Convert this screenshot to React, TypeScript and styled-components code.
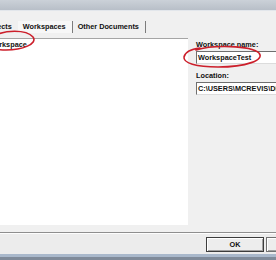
import React from 'react';
import styled, {createGlobalStyle} from 'styled-components';

const GlobalStyle = createGlobalStyle`
    html, body {
        margin: 0;
        padding: 0;
        width: 276px;
        height: 260px;
        overflow: hidden;
        background: #f0f0f0;
        font-family: "Liberation Sans", Arial, sans-serif;
    }
`;

// the screenshot is a crop of a wider dialog, so the window starts left of the viewport
const Window = styled.div`
    position: relative;
    width: 354px;
    height: 260px;
    margin-left: -24px;
    display: flex;
    flex-direction: column;
    background: #f0f0f0;
`;

const TitleBand = styled.div`
    height: 10px;
    background: linear-gradient(#cbd1d8, #b8bfc8);
    border-bottom: 1px solid #e2e6eb;
`;

const TabStrip = styled.div`
    height: 27px;
    box-sizing: border-box;
    display: flex;
    align-items: flex-end;
    padding: 0 0 5px 2px;
    background: #f0f0f0;
`;

const Tab = styled.div<{ $active?: boolean; $sep?: boolean }>`
    height: 12px;
    line-height: 12px;
    padding: 0 6px 0 5px;
    font-size: 7.3px;
    font-weight: bold;
    color: #111;
    white-space: nowrap;
    background: ${p => p.$active ? '#f7f7f7' : 'transparent'};
    border-right: ${p => p.$sep ? '1px solid #7c7c7c' : 'none'};
`;

const Main = styled.div`
    height: 187px;
    display: flex;
`;

const ListPanel = styled.div`
    flex: none;
    width: 212px;
    background: #fff;
    border-top: 1px solid #a5a5a5;
    padding: 1px 0 0 12px;
    box-sizing: border-box;
`;

const ListItem = styled.div`
    font-size: 7.3px;
    font-weight: bold;
    line-height: 9px;
    color: #111;
`;

const DetailPanel = styled.div`
    flex: 1;
    min-width: 0;
    padding: 2px 0 0 8px;
    display: flex;
    flex-direction: column;
`;

const FieldLabel = styled.div<{ $gap?: number }>`
    font-size: 7.3px;
    font-weight: bold;
    line-height: 9px;
    color: #111;
    margin-top: ${p => p.$gap ?? 0}px;
`;

const TextBox = styled.div`
    height: 11px;
    margin-top: 2px;
    background: #fff;
    border: 1px solid #dcdcdc;
    border-top-color: #6f6f6f;
    border-left-color: #6f6f6f;
    padding-left: 1px;
    font-size: 7.3px;
    font-weight: bold;
    line-height: 11px;
    color: #111;
    white-space: nowrap;
    overflow: hidden;
`;

const Spacer = styled.div`
    height: 7px;
`;

const Divider = styled.div`
    height: 1px;
    background: #8e8e8e;
    border-bottom: 1px solid #fdfdfd;
`;

const ButtonBar = styled.div`
    height: 20px;
    display: flex;
    justify-content: flex-end;
    gap: 2px;
    padding: 3px 6px 0 0;
    box-sizing: border-box;
    background: #ececec;
`;

const Button = styled.div<{ $default?: boolean }>`
    width: 58px;
    height: 15px;
    box-sizing: border-box;
    display: flex;
    align-items: center;
    justify-content: center;
    font-size: 7.3px;
    font-weight: bold;
    color: #111;
    background: #ededed;
    border: 1px solid ${p => p.$default ? '#3c3c3c' : '#707070'};
    box-shadow: inset 1px 1px 0 #fff, inset -1px -1px 0 #a0a0a0;
`;

const BottomEdge = styled.div`
    height: 6px;
    background: linear-gradient(#a9b8cb 0, #a9b8cb 3px, #7f8a99 3px);
`;

const Annotations = styled.svg`
    position: absolute;
    left: 24px;
    top: 0;
    width: 276px;
    height: 260px;
    pointer-events: none;
    overflow: visible;
`;

const App: React.FC = () => {
    return (
        <>
            <GlobalStyle/>
            <Window>
                <TitleBand/>
                <TabStrip>
                    <Tab>Projects</Tab>
                    <Tab $active $sep>Workspaces</Tab>
                    <Tab $sep>Other Documents</Tab>
                </TabStrip>
                <Main>
                    <ListPanel>
                        <ListItem>Workspace</ListItem>
                    </ListPanel>
                    <DetailPanel>
                        <FieldLabel>Workspace name:</FieldLabel>
                        <TextBox>WorkspaceTest</TextBox>
                        <FieldLabel $gap={7}>Location:</FieldLabel>
                        <TextBox>C:\USERS\MCREVIS\DESKTOP\WORKSPACETEST</TextBox>
                    </DetailPanel>
                </Main>
                <Spacer/>
                <Divider/>
                <ButtonBar>
                    <Button $default>OK</Button>
                    <Button>Cancel</Button>
                </ButtonBar>
                <BottomEdge/>
                <Annotations viewBox="0 0 276 260">
                    <path d="M -6 36 C 4 30, 26 29, 33 37 C 38 44, 22 50, 6 50 C -8 50, -18 46, -14 40"
                          fill="none" stroke="#cc1f2b" strokeWidth="1.6" strokeLinecap="round"/>
                    <path d="M 196 50 C 212 45, 250 45, 259 53 C 265 60, 246 67, 218 67 C 196 67, 183 63, 184 57 C 185 52, 192 49, 200 48"
                          fill="none" stroke="#cc1f2b" strokeWidth="1.6" strokeLinecap="round"/>
                </Annotations>
            </Window>
        </>
    );
};

export default App;
